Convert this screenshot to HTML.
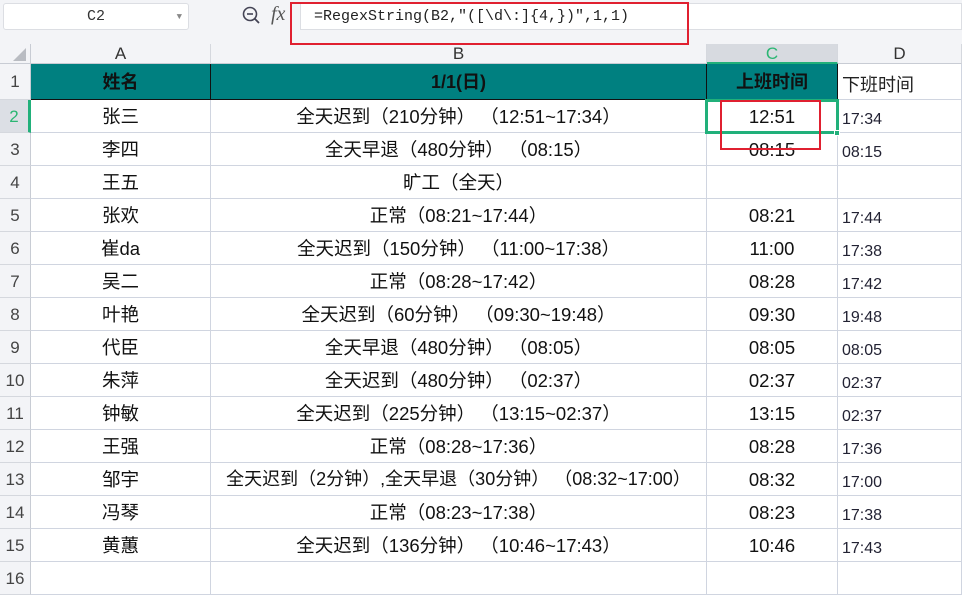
<!DOCTYPE html>
<html><head><meta charset="utf-8"><style>
*{margin:0;padding:0;box-sizing:border-box}
body{width:962px;height:579px;overflow:hidden;background:#fff;position:relative;font-family:"Liberation Sans","Noto Sans CJK SC",sans-serif;color:#111}
.a{position:absolute}
.top{left:0;top:0;width:962px;height:44px;background:#f3f4f7}
.nb{left:3px;top:3px;width:186px;height:27px;background:#fff;border:1px solid #dcdee3;border-radius:3px;font:15px "Liberation Mono",monospace;color:#333;text-align:center;line-height:26px}
.fx{left:300px;top:3px;width:662px;height:27px;background:#fff;border:1px solid #dcdee3;font:15px "Liberation Mono","Noto Sans CJK SC",monospace;line-height:26px;padding-left:13px;color:#222}
.hdr{top:44px;height:20px;background:#f3f4f7;border-right:1px solid #d5d8de;border-bottom:1px solid #c8ccd4;text-align:center;font-size:17px;line-height:20px;color:#333}
.rh{left:0;width:31px;background:#f3f4f7;border-right:1px solid #c8ccd4;border-bottom:1px solid #d5d8de;text-align:center;font-size:17px;color:#444}
.c{border-right:1px solid #d0d5e0;border-bottom:1px solid #d0d5e0;font-size:18.5px;text-align:center;white-space:nowrap}
.d{text-align:left;padding-left:4px;padding-top:3px;font-size:16px;color:#223}
</style></head><body>
<div class="a top"></div>
<div class="a nb">C2<span style="position:absolute;right:6px;top:0;font-size:9px;color:#888">▼</span></div>
<svg class="a" style="left:242px;top:6px" width="20" height="20" viewBox="0 0 20 20"><circle cx="8" cy="8" r="6.5" fill="none" stroke="#445" stroke-width="1.6"/><line x1="5" y1="8" x2="11" y2="8" stroke="#445" stroke-width="1.6"/><line x1="12.8" y1="12.8" x2="17" y2="17" stroke="#445" stroke-width="1.8"/></svg>
<div class="a" style="left:271px;top:3px;font:italic 20px 'Liberation Serif',serif;color:#555">fx</div>
<div class="a fx">=RegexString(B2,″([\d\:]{4,})″,1,1)</div>

<div class="a hdr" style="left:0;width:31px;border-right-color:#c8ccd4"><svg width="31" height="20"><polygon points="26,4 26,17 13,17" fill="#b9bcc2"/></svg></div>
<div class="a hdr" style="left:31px;width:180px">A</div>
<div class="a hdr" style="left:211px;width:496px">B</div>
<div class="a hdr" style="left:707px;width:131px;background:#d7dae0;color:#2bb673;border-bottom:2px solid #21b07a">C</div>
<div class="a hdr" style="left:838px;width:124px">D</div>
<div class="a" style="left:290px;top:2px;width:399px;height:43px;border:2px solid #e02030"></div>

<div id="g"></div>
<script>
var rows=[["姓名","1/1(日)","上班时间","下班时间"],
["张三","全天迟到（210分钟） （12:51~17:34）","12:51","17:34"],
["李四","全天早退（480分钟） （08:15）","08:15","08:15"],
["王五","旷工（全天）","",""],
["张欢","正常（08:21~17:44）","08:21","17:44"],
["崔da","全天迟到（150分钟） （11:00~17:38）","11:00","17:38"],
["吴二","正常（08:28~17:42）","08:28","17:42"],
["叶艳","全天迟到（60分钟） （09:30~19:48）","09:30","19:48"],
["代臣","全天早退（480分钟） （08:05）","08:05","08:05"],
["朱萍","全天迟到（480分钟） （02:37）","02:37","02:37"],
["钟敏","全天迟到（225分钟） （13:15~02:37）","13:15","02:37"],
["王强","正常（08:28~17:36）","08:28","17:36"],
["邹宇","全天迟到（2分钟）,全天早退（30分钟） （08:32~17:00）","08:32","17:00"],
["冯琴","正常（08:23~17:38）","08:23","17:38"],
["黄蕙","全天迟到（136分钟） （10:46~17:43）","10:46","17:43"],
["","","",""]];
var h="";var cols=[[31,180],[211,496],[707,131],[838,124]];
for(var i=0;i<16;i++){
 var y=i==0?64:100+(i-1)*33, ht=i==0?36:33;
 var hl=i==1;
 h+='<div class="a rh" style="top:'+y+'px;height:'+ht+'px;line-height:'+ht+'px;'+(hl?'background:#dcdfe5;color:#2bb673;border-right:3px solid #21b07a':'')+'">'+(i+1)+'</div>';
 for(var j=0;j<4;j++){
  var st='left:'+cols[j][0]+'px;top:'+y+'px;width:'+cols[j][1]+'px;height:'+ht+'px;line-height:'+ht+'px;';
  var cls='a c';
  if(i==0&&j<3){st+='background:#008080;font-weight:bold;font-size:18px;border-right:1px solid #111;border-bottom:1px solid #111;';}
  if(i==12&&j==1){st+='font-size:18px;';}
  if(j==3){cls+=' d';if(i==0)st+='font-size:18px;color:#222;';}
  h+='<div class="'+cls+'" style="'+st+'">'+rows[i][j].replace(/ /g,'&nbsp;')+'</div>';
 }
}
document.getElementById('g').innerHTML=h;
</script>
<div class="a" style="left:705px;top:99px;width:134px;height:35px;border:3px solid #21b07a"></div>
<div class="a" style="left:834px;top:130px;width:6px;height:6px;background:#21b07a;border:1px solid #fff"></div>
<div class="a" style="left:720px;top:100px;width:101px;height:50px;border:2px solid #e02030"></div>
</body></html>
